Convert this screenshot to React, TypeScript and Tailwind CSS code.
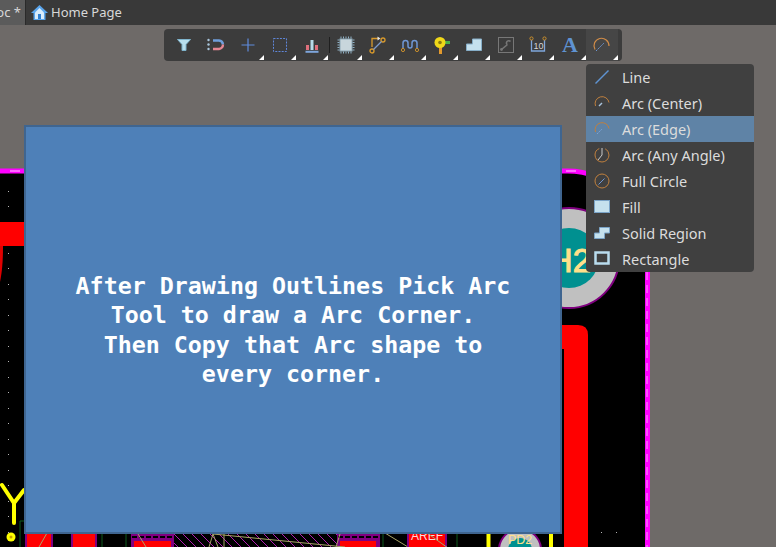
import type { ReactNode } from "react"

const ui = "font-['Noto_Sans',sans-serif]"

function Icon({ size = 20, children }: { size?: number; children: ReactNode }) {
  return (
    <svg width={size} height={size} viewBox={`0 0 ${size} ${size}`} fill="none">
      {children}
    </svg>
  )
}

const toolbarIcons: { icon: ReactNode; corner: boolean }[] = [
  {
    corner: false,
    icon: (
      <Icon>
        <path d="M3.500 4.500h13l-4.500 5v6h-4v-6z" fill="#b9e0ee" stroke="#7fb4cc" />
      </Icon>
    ),
  },
  {
    corner: false,
    icon: (
      <Icon>
        <circle cx="2.500" cy="5" r="1.200" fill="#a9c6dc" />
        <circle cx="2.500" cy="9.500" r="1.200" fill="#a9c6dc" />
        <circle cx="2.500" cy="14" r="1.200" fill="#a9c6dc" />
        <path d="M7 5.500h6a4.500 4.500 0 0 1 4 4" stroke="#6f9fdc" strokeWidth="2.400" />
        <path d="M7 14h6a4.500 4.500 0 0 0 4-4.500" stroke="#e58794" strokeWidth="2.400" />
      </Icon>
    ),
  },
  {
    corner: true,
    icon: (
      <Icon>
        <path d="M10 3.500v13M3.500 10h13" stroke="#5f8bdc" strokeWidth="1.200" />
      </Icon>
    ),
  },
  {
    corner: true,
    icon: (
      <Icon>
        <rect x="3.500" y="3.500" width="13" height="13" stroke="#5f86d8" strokeDasharray="2 1.200" />
      </Icon>
    ),
  },
  {
    corner: true,
    icon: (
      <Icon>
        <path d="M4 10h3v5H4zM13 10h3v5h-3z" fill="#e0707c" />
        <path d="M8.500 5h3v10h-3z" fill="#b6dbe9" />
        <path d="M3.500 16.800h13" stroke="#7ea6dc" strokeWidth="2" />
      </Icon>
    ),
  },
  {
    corner: true,
    icon: (
      <Icon>
        <rect x="4" y="4" width="12" height="12" fill="#c8d6dc" stroke="#8fa9b8" />
        <path
          d="M5 1.500v2M7.500 1.500v2M10 1.500v2M12.500 1.500v2M15 1.500v2M5 16.500v2M7.500 16.500v2M10 16.500v2M12.500 16.500v2M15 16.500v2M1.500 5h2M1.500 7.500h2M1.500 10h2M1.500 12.500h2M1.500 15h2M16.500 5h2M16.500 7.500h2M16.500 10h2M16.500 12.500h2M16.500 15h2"
          stroke="#8fb0c4"
        />
      </Icon>
    ),
  },
  {
    corner: true,
    icon: (
      <Icon>
        <path d="M4 12V3.500h7" stroke="#d99a2b" strokeWidth="1.300" />
        <path d="M9.500 1.500l3 2-3 2z" fill="#e6e6e6" />
        <circle cx="15" cy="5" r="2" stroke="#d99a2b" strokeWidth="1.300" />
        <circle cx="4" cy="16" r="2" stroke="#d99a2b" strokeWidth="1.300" />
        <path d="M5.500 14.500l8-8" stroke="#7d9ccc" strokeWidth="1.300" />
      </Icon>
    ),
  },
  {
    corner: true,
    icon: (
      <Icon>
        <path d="M3 14V8a2.500 2.500 0 0 1 5 0v3a2 2 0 0 0 4 0V8a2.500 2.500 0 0 1 5 0v6" stroke="#6f97d4" strokeWidth="1.500" />
        <circle cx="3" cy="15" r="1.600" stroke="#c98f2c" />
        <circle cx="17" cy="15" r="1.600" stroke="#c98f2c" />
      </Icon>
    ),
  },
  {
    corner: true,
    icon: (
      <Icon>
        <path d="M7 12h3v7H7z" fill="#e39a2d" />
        <path d="M12 6h6v3h-6z" fill="#49b04a" />
        <circle cx="8" cy="7.500" r="5.500" fill="#f0d818" />
        <circle cx="8" cy="7.500" r="1.800" fill="#8a7a10" />
      </Icon>
    ),
  },
  {
    corner: true,
    icon: (
      <Icon>
        <path d="M2.500 15.500V9h6V4h9v11.500z" fill="#c5e1ee" stroke="#86aec8" />
      </Icon>
    ),
  },
  {
    corner: true,
    icon: (
      <Icon>
        <rect x="2.500" y="2.500" width="15" height="15" stroke="#777" />
        <path d="M5.500 14.500l6-5" stroke="#777" strokeWidth="1.600" />
        <circle cx="5.500" cy="14.500" r="1.400" fill="#777" />
        <path d="M11 9.500a2 2 0 0 1 3.500-3" stroke="#777" strokeWidth="1.600" />
      </Icon>
    ),
  },
  {
    corner: true,
    icon: (
      <Icon>
        <path d="M3.500 5v11h13V5" stroke="#7ea6dc" strokeWidth="1.300" />
        <circle cx="3.500" cy="3.500" r="1.600" stroke="#c98f2c" />
        <circle cx="16.500" cy="3.500" r="1.600" stroke="#c98f2c" />
        <text x="5.500" y="13.500" fontSize="9" fill="#d5d5d5" fontFamily="Liberation Sans, sans-serif">10</text>
      </Icon>
    ),
  },
  {
    corner: true,
    icon: (
      <span className="font-['Liberation_Serif',serif] text-[22px] leading-none font-bold text-[#5f93d2]">A</span>
    ),
  },
  {
    corner: true,
    icon: (
      <Icon>
        <path d="M3 14.500A7.500 7.500 0 1 1 17 11" stroke="#d08c48" strokeWidth="1.200" />
        <path d="M4 16l8-8" stroke="#6f97d4" strokeDasharray="2 1" />
      </Icon>
    ),
  },
]

const MenuArc = ({ hand }: { hand: ReactNode }) => (
  <Icon size={16}>
    <path d="M1.500 11A7 7 0 1 1 15 7.500" stroke="#c0803e" />
    {hand}
  </Icon>
)

const menuItems: { label: string; active?: boolean; icon: ReactNode }[] = [
  {
    label: "Line",
    icon: (
      <Icon size={16}>
        <path d="M1.500 14.500L14.500 1.500" stroke="#5f93d2" strokeWidth="1.500" />
      </Icon>
    ),
  },
  {
    label: "Arc (Center)",
    icon: <MenuArc hand={<path d="M5 11l3-3" stroke="#a9c4de" strokeWidth="1.500" />} />,
  },
  {
    label: "Arc (Edge)",
    active: true,
    icon: <MenuArc hand={<path d="M3 13l5-5" stroke="#7ba4d8" strokeDasharray="2 1" />} />,
  },
  {
    label: "Arc (Any Angle)",
    icon: (
      <Icon size={16}>
        <circle cx="8" cy="8" r="7" stroke="#c0803e" strokeDasharray="30 6" />
        <path d="M8 1v7l-4 5" stroke="#c9c9c9" />
      </Icon>
    ),
  },
  {
    label: "Full Circle",
    icon: (
      <Icon size={16}>
        <circle cx="8" cy="8" r="7" stroke="#c0803e" />
        <path d="M4.500 11.500l6-6" stroke="#6f97d4" />
      </Icon>
    ),
  },
  {
    label: "Fill",
    icon: (
      <Icon size={16}>
        <rect x="0.500" y="1.500" width="15" height="12" fill="#c5e1ee" stroke="#7ba4c8" />
      </Icon>
    ),
  },
  {
    label: "Solid Region",
    icon: (
      <Icon size={16}>
        <path d="M.5 13.500V8h5V2.500h10V8h-5v5.500z" fill="#c5e1ee" stroke="#7ba4c8" />
      </Icon>
    ),
  },
  {
    label: "Rectangle",
    icon: (
      <Icon size={16}>
        <rect x="1.500" y="1.500" width="13" height="11" stroke="#b9dcee" strokeWidth="2.500" />
      </Icon>
    ),
  },
]

const noteLines = [
  "After Drawing Outlines Pick Arc",
  "Tool to draw a Arc Corner.",
  "Then Copy that Arc shape to",
  "every corner.",
]

// grid dots of the board, only the columns that show beside the note
const dotColumns = [8, 570, 585, 601, 616, 632]
const dotRows = Array.from({ length: 24 }, (_, i) => Math.round(175 + i * 15.5))

function ToolButton({ icon, corner, active }: { icon: ReactNode; corner: boolean; active?: boolean }) {
  return (
    <div className={`relative flex h-8 w-8 items-center justify-center ${active ? "bg-[#464646]" : ""}`}>
      {icon}
      {corner && (
        <span className="absolute right-0 bottom-[1px] h-[5px] w-[5px] bg-white [clip-path:polygon(100%_0,100%_100%,0_100%)]" />
      )}
    </div>
  )
}

function Board() {
  return (
    <svg className="absolute top-0 left-0" width="776" height="547" viewBox="0 0 776 547">
      <defs>
        <pattern id="hatch" x="0" y="0" width="9" height="9" patternUnits="userSpaceOnUse">
          <path d="M0 0L9 9M-9 0L9 18M0 -9L18 9" stroke="#b01fb0" strokeWidth="1" />
        </pattern>
      </defs>
      <path d="M-3 171H567A80 80 0 0 1 647.500 251V550H-3z" fill="#000" />
      {dotColumns.map((x) => dotRows.map((y) => <rect key={`${x}-${y}`} x={x} y={y} width="1" height="1" fill="#b8b8b8" />))}
      <path d="M-3 171H567A80 80 0 0 1 647.500 251V550" stroke="#ff00ff" strokeWidth="5" />
      <path d="M647 272V550" stroke="#ffc8ff" strokeWidth="0.800" strokeDasharray="8 5" />
      <path d="M10 171h10M566 171h10" stroke="#ffd0ff" />
      {/* left side */}
      <path d="M0 222H26V246H0z" fill="#ff0000" />
      <path d="M0 246H3C3 262 2 272 0 282z" fill="#e00000" />
      <path d="M2 485l12 18l10 -13M14 503v20" stroke="#ffff00" strokeWidth="4" strokeLinecap="round" />
      <circle cx="11" cy="537" r="4.500" fill="#ffff00" />
      <circle cx="11" cy="537" r="1.500" fill="#c8a000" />
      {/* H2 pad */}
      <circle cx="569" cy="258" r="50" fill="#c0c0c0" stroke="#800080" strokeWidth="2" />
      <circle cx="569" cy="258" r="30" fill="#009090" />
      <text x="591" y="272" fontSize="33" textAnchor="end" fill="#ffe08a" stroke="#ffe08a" strokeWidth="1" fontFamily="Liberation Sans, sans-serif">H2</text>
      {/* red trace on the right */}
      <path d="M540 325H578Q588 325 588 335V550H564V349H540z" fill="#ff0000" />
      {/* bottom strip */}
      <path d="M25 530h28v20H25zM71 530h26v20H71z" fill="#800080" />
      <path d="M27 530h24v20H27zM73 530h22v20H73z" fill="#ff0000" />
      <path d="M20 547v-26h6M102 530v20M126 530v20M383 530v20M457 530v20" stroke="#0d5a1c" strokeWidth="1" />
      <path d="M131 530h43v20h-43zM337 530h43v20h-43z" fill="#800080" />
      <path d="M132 537h41" stroke="#000" strokeWidth="2" strokeDasharray="5 2" />
      <path d="M338 537h41" stroke="#000" strokeWidth="2" strokeDasharray="5 2" />
      <path d="M134 541h37v8h-37zM340 541h36v8h-36z" fill="#ff0000" />
      <rect x="174" y="530" width="163" height="20" fill="url(#hatch)" />
      <path d="M39 547l8 -14M146 547l-8 -13M213 534l-4 13M213 534l5 13M213 534L345 547M224 534v13M340 534l-4 13M380 530l28 17" stroke="#a8a468" />
      <rect x="407" y="528" width="40" height="22" fill="#800080" />
      <rect x="409" y="528" width="36" height="22" fill="#ff0000" />
      <text x="411" y="540" fontSize="12" fill="#ffd8d8" fontFamily="Liberation Sans, sans-serif">AREF</text>
      <path d="M420 528l28 20" stroke="#a8a468" />
      <path d="M488.500 530v20M551 530v20" stroke="#ffff00" strokeWidth="4" />
      <circle cx="520" cy="550" r="21" fill="#c0c0c0" stroke="#800080" strokeWidth="2" />
      <circle cx="520" cy="550" r="12" fill="#009090" />
      <text x="508" y="544" fontSize="12.500" fill="#ffe08a" fontFamily="Liberation Sans, sans-serif">PD2</text>
    </svg>
  )
}

export default function App() {
  return (
    <div className={`${ui} relative h-[547px] w-[776px] overflow-hidden bg-[#6e6a68]`}>
      <Board />

      <div className="relative flex h-[25px] items-stretch bg-[#393939] text-[13px] text-[#d8d8d8]">
        <div className="flex w-[26px] items-center justify-end overflow-hidden border-r border-[#2a2a2a] bg-[#5b5b5b] pr-[4px] whitespace-nowrap">
          oc *
        </div>
        <div className="flex items-center gap-[3px] pl-[5px]">
          <svg width="17" height="17" viewBox="0 0 17 17">
            <path d="M8.500 1L17 9h-2.500v7H2.500V9H0z" fill="#5aa5ec" />
            <path d="M8.500 4L13 8.500V15H4V8.500z" fill="#d8ecfb" />
            <path d="M7 10h3v5H7z" fill="#2f7fd0" />
          </svg>
          <span>Home Page</span>
        </div>
      </div>

      <div className="relative mt-[4px] ml-[164px] flex h-8 w-[458px] items-center rounded-[4px] bg-[#3c3c3c] pl-[4px]">
        {toolbarIcons.slice(0, 5).map((item, i) => (
          <ToolButton key={i} icon={item.icon} corner={item.corner} />
        ))}
        <div className="ml-[1px] h-[16px] w-px bg-[#1f1f1f]" />
        {toolbarIcons.slice(5).map((item, i) => (
          <ToolButton key={i} icon={item.icon} corner={item.corner} active={i === 8} />
        ))}
      </div>

      {/* blue note over the board */}
      <div className="absolute top-[125px] left-[24px] flex h-[409px] w-[538px] flex-col items-center justify-center border-2 border-[#3f6590] bg-[#4e80b8] text-center font-['DejaVu_Sans_Mono',monospace] text-[23.300px] leading-[29.300px] font-bold text-white">
        {noteLines.map((line) => (
          <p key={line}>{line}</p>
        ))}
      </div>

      {/* drawing tools dropdown */}
      <div className="absolute top-[64px] left-[586px] w-[168px] rounded-[4px] bg-[#404040] text-[14.500px] text-[#dcdcdc]">
        {menuItems.map((item) => (
          <div key={item.label} className={`flex h-[26px] items-center pl-[8px] ${item.active ? "bg-[#5f83a6]" : ""}`}>
            <span className="mr-[12px] flex h-4 w-4 items-center justify-center">{item.icon}</span>
            <span className="pt-[1px] whitespace-nowrap">{item.label}</span>
          </div>
        ))}
      </div>
    </div>
  )
}
